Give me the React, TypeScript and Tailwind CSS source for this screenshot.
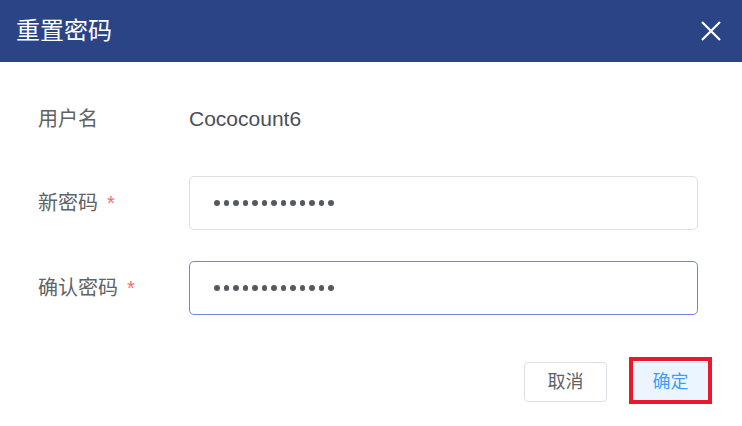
const CJK = "font-['Liberation_Sans','Noto_Sans_CJK_SC',sans-serif]";

function Dots() {
  return (
    <div className="flex items-center gap-[4px]">
      {Array.from({ length: 13 }).map((_, i) => (
        <span key={i} className="h-[5.5px] w-[5.5px] rounded-full bg-[#555a60]" />
      ))}
    </div>
  );
}

function Field({ label, focused }: { label: string; focused?: boolean }) {
  return (
    <div className="flex h-[54px] items-center">
      <div className="w-[151px] shrink-0 text-[20px] text-[#606266]">
        {label}
        <span className="ml-[9px] text-[#f56c6c]">*</span>
      </div>
      <div
        className={
          focused
            ? "flex h-[54px] flex-1 items-center rounded-[5px] border border-[#6f83ea] pl-[24px]"
            : "flex h-[54px] flex-1 items-center rounded-[5px] border border-[#dcdfe6] pl-[24px]"
        }
      >
        <Dots />
      </div>
    </div>
  );
}

export default function App() {
  return (
    <div className={`h-[426px] w-[742px] overflow-hidden bg-white ${CJK}`}>
      <div className="flex h-[62px] items-center justify-between bg-[#2b4485] pl-[16px] pr-[20px]">
        <span className="text-[24px] text-white">重置密码</span>
        <svg width="22" height="22" viewBox="0 0 22 22" fill="none">
          <path d="M2 2L20 20M20 2L2 20" stroke="white" strokeWidth="2.2" />
        </svg>
      </div>
      <div className="pl-[38px] pr-[44px] pt-[30px]">
        <div className="flex h-[54px] items-center">
          <div className="w-[151px] shrink-0 text-[20px] text-[#606266]">用户名</div>
          <div className="text-[21px] text-[#4a4f56]">Cococount6</div>
        </div>
        <div className="mt-[30px]">
          <Field label="新密码" />
        </div>
        <div className="mt-[31px]">
          <Field label="确认密码" focused />
        </div>
      </div>
      <div className="mt-[47px] flex justify-end gap-[22px] pr-[30px]">
        <button className="h-[40px] w-[83px] rounded-[4px] border border-[#dcdfe6] bg-white text-[18px] text-[#606266]">
          取消
        </button>
        <div className="relative">
          <button className="h-[40px] w-[83px] rounded-[4px] border border-[#c6e2ff] bg-[#ecf5ff] text-[18px] text-[#409eff]">
            确定
          </button>
          <div className="absolute -top-[5px] left-0 h-[47px] w-[83px] border-[4px] border-[#e8192c]" />
        </div>
      </div>
    </div>
  );
}
